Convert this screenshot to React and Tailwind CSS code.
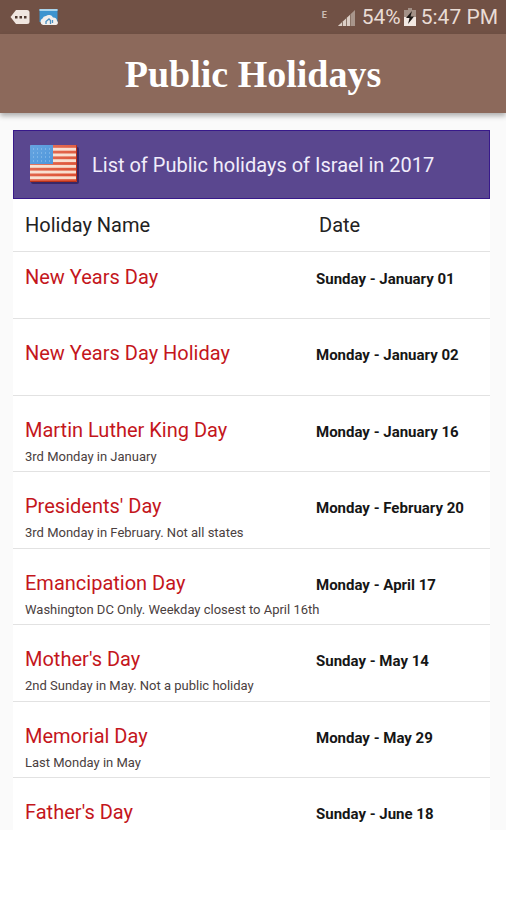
import React from 'react';

const holidays = [
  { name: 'New Years Day', date: 'Sunday - January 01' },
  { name: 'New Years Day Holiday', date: 'Monday - January 02' },
  { name: 'Martin Luther King Day', date: 'Monday - January 16', note: '3rd Monday in January' },
  { name: "Presidents' Day", date: 'Monday - February 20', note: '3rd Monday in February. Not all states' },
  { name: 'Emancipation Day', date: 'Monday - April 17', note: 'Washington DC Only. Weekday closest to April 16th' },
  { name: "Mother's Day", date: 'Sunday - May 14', note: '2nd Sunday in May. Not a public holiday' },
  { name: 'Memorial Day', date: 'Monday - May 29', note: 'Last Monday in May' },
  { name: "Father's Day", date: 'Sunday - June 18' },
];

const MessageIcon = () => (
  <svg width="20" height="16" viewBox="0 0 20 16" aria-hidden="true">
    <path d="M6 1h11q2.500 0 2.500 2.500v9q0 2.500-2.500 2.500H6L.5 8z" fill="#f0e6e0" />
    <rect x="5" y="7" width="2.500" height="2.500" fill="#4e382f" />
    <rect x="9.500" y="7" width="2.500" height="2.500" fill="#4e382f" />
    <rect x="14" y="7" width="2.500" height="2.500" fill="#4e382f" />
  </svg>
);

const CloudPhotoIcon = () => (
  <svg width="22" height="18" viewBox="0 0 22 18" aria-hidden="true">
    <path d="M1.500 1h18v13h-18z" fill="#3d94cf" />
    <path d="M1.500 1h18v2h-18z" fill="#a9d4ec" />
    <path d="M5 17a3.500 3.500 0 0 1-.5-6.500A3.500 3.500 0 0 1 8 8a4.500 4.500 0 0 1 7 1.500 3.500 3.500 0 0 1 4 3.500A2.200 2.200 0 0 1 18 17z" fill="#f3efec" />
    <path d="M8 16v-2.500l3-2.500 1.500 1.500V16M14.500 15v-3" fill="none" stroke="#4a8fc0" strokeWidth="1.300" />
  </svg>
);

const SignalIcon = () => (
  <svg width="17" height="17" viewBox="0 0 17 17" aria-hidden="true">
    <path d="M0 17 17 1v16z" fill="#a8958b" />
    <path d="M0 17 12 6v11z" fill="#dccfc7" />
    <path d="M4.500 12v5M8.500 9v8M12.500 5v12" stroke="#8a7468" strokeWidth="1" />
  </svg>
);

const BatteryIcon = () => (
  <svg width="12" height="18" viewBox="0 0 12 18" aria-hidden="true">
    <path d="M4 0h4v2h4v16H0V2h4z" fill="#a39187" />
    <path d="M0 9h12v9H0z" fill="#f2e8e2" />
    <path d="M8 3 2 10h3.500L4 16l6-7.500H6.500z" fill="#1d1815" />
  </svg>
);

const FlagIcon = () => (
  <svg width="50" height="40" viewBox="0 0 50 40" role="img" aria-label="Flag of the United States">
    <defs>
      <linearGradient id="shine" x1="0" y1="0" x2="1" y2="1">
        <stop offset="0" stopColor="#fff" stopOpacity="0.250" />
        <stop offset="1" stopColor="#fff" stopOpacity="0" />
      </linearGradient>
      <clipPath id="flag">
        <rect x="0" y="0" width="47" height="37" rx="1" />
      </clipPath>
    </defs>
    <rect x="1" y="2" width="48" height="37" rx="2" fill="#3a2766" />
    <g clipPath="url(#flag)">
      <rect x="0" y="0" width="47" height="37" fill="#f8dccb" />
      {[0, 1, 2, 3, 4, 5, 6].map((i) => (
        <rect key={i} x="0" y={i * 5.7} width="47" height="2.800" fill="#dc4a2c" />
      ))}
      <rect x="0" y="0" width="23" height="19" fill="#3487d6" />
      {[4, 8, 12, 16].map((y) => (
        <path key={y} d={`M3 ${y}h18`} stroke="#86bdec" strokeWidth="1" strokeDasharray="1 3" />
      ))}
      <rect x="0" y="0" width="47" height="37" fill="url(#shine)" />
    </g>
    <path d="M46.500 0v36.500H0" fill="none" stroke="#b8321b" strokeWidth="1" />
  </svg>
);

const StatusBar = () => (
  <div className="flex h-[34px] items-center justify-between bg-[#715145] pl-[10px] pr-2 text-[#e9dcd5]">
    <div className="flex items-center gap-2">
      <MessageIcon />
      <CloudPhotoIcon />
    </div>
    <div className="flex items-center text-[21px] leading-6">
      <span className="mr-[11px] h-6 text-[9px] font-bold leading-5 text-[#cdbdb4]">E</span>
      <SignalIcon />
      <span className="ml-[7px] mr-[3px]">54%</span>
      <BatteryIcon />
      <span className="ml-[5px]">5:47 PM</span>
    </div>
  </div>
);

const App = () => {
  return (
    <div className="min-h-screen bg-white font-[Roboto,sans-serif]">
      <div className="bg-[#fafafa]">
        <StatusBar />

        {/* Title bar */}
        <header className="flex h-[79px] items-center justify-center bg-[#8c695b] shadow-[0_3px_5px_rgba(0,0,0,0.3)]">
          <h1 className="font-['Liberation_Serif',serif] text-[38px] font-bold leading-10 text-white">
            Public Holidays
          </h1>
        </header>

        <main className="pl-[13px] pr-4 pt-[17px]">
          {/* Country banner */}
          <div className="flex h-[69px] items-center gap-3 border border-[#38198a] bg-[#5a478f] pl-4">
            <FlagIcon />
            <h2 className="text-[20px] leading-6 text-[#f1edfb]">List of Public holidays of Israel in 2017</h2>
          </div>

          {/* Holiday list */}
          <table className="w-full table-fixed border-collapse bg-white text-left">
            <thead>
              <tr className="h-[52px] border-b border-[#e2e2e2] text-[20px] leading-6 text-[#222222]">
                <th className="pl-3 font-normal">Holiday Name</th>
                <th className="w-[174px] pl-[3px] font-normal">Date</th>
              </tr>
            </thead>
            <tbody>
              {holidays.map((holiday) => (
                <tr
                  key={holiday.name}
                  className="group h-[76px] border-b border-[#e2e2e2] align-baseline even:h-[77px] first:h-[67px] last:h-[53px]! last:border-b-0"
                >
                  <td className="whitespace-nowrap pl-3 pt-[22px] group-first:pt-[13px]">
                    <div className="text-[20px] leading-6 text-[#c4161c]">{holiday.name}</div>
                    {holiday.note && <div className="mt-[7px] text-[13px] leading-4 text-[#4a4040]">{holiday.note}</div>}
                  </td>
                  <td className="whitespace-nowrap pt-[22px] text-[15px] font-bold leading-6 text-[#161616] group-first:pt-[13px]">
                    {holiday.date}
                  </td>
                </tr>
              ))}
            </tbody>
          </table>
        </main>
      </div>
    </div>
  );
};

export default App;
